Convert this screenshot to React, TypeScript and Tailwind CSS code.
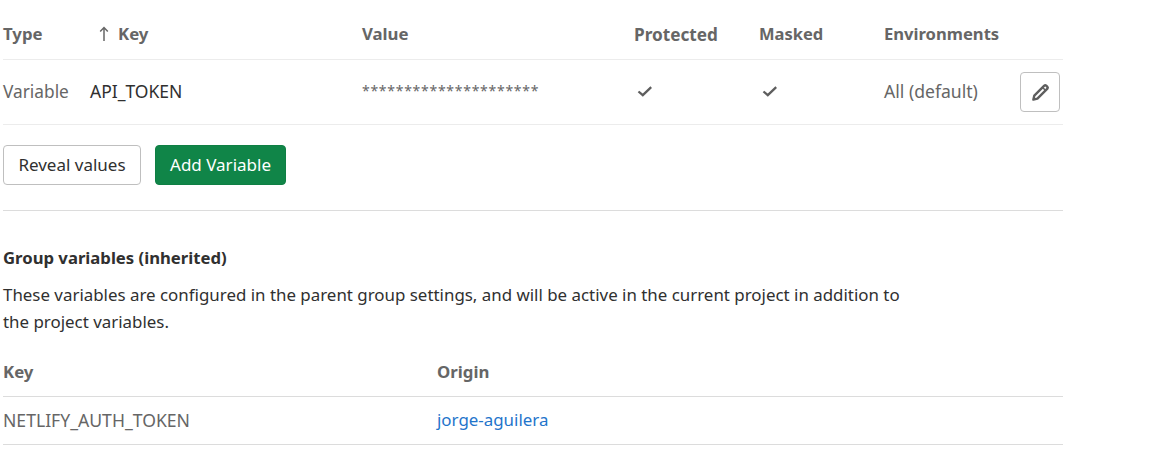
const font = "font-['Noto_Sans',sans-serif]"

function CheckIcon() {
  return (
    <svg width="16" height="16" viewBox="0 0 16 16" className="text-[#5e5e5e]">
      <path d="M1.5 8.5 L5.8 12.2 L14.2 4.2" fill="none" stroke="currentColor" strokeWidth="2.3" />
    </svg>
  )
}

function EditIcon() {
  return (
    <svg width="19" height="19" viewBox="0 0 16 16" className="text-[#5e5e5e]">
      <path
        d="M2 14 L2.8 10.6 L11.2 2.2 Q12 1.5 12.8 2.2 L13.8 3.2 Q14.5 4 13.8 4.8 L5.4 13.2 Z"
        fill="none"
        stroke="currentColor"
        strokeWidth="2"
        strokeLinejoin="round"
      />
      <path d="M10 4 L12 6" stroke="currentColor" strokeWidth="1.2" />
    </svg>
  )
}

function ArrowUpIcon() {
  return (
    <svg width="10" height="16" viewBox="0 0 10 16" className="text-[#666666]">
      <path d="M5 15 V2 M1.2 5.6 L5 1.6 L8.8 5.6" fill="none" stroke="currentColor" strokeWidth="1.5" />
    </svg>
  )
}

export default function App() {
  return (
    <div className={`w-[1176px] h-[466px] overflow-hidden bg-white pl-[3px] pr-[113px] text-[#303030] ${font}`}>
      {/* Project variables */}
      <div className="grid grid-cols-[87px_272px_272px_125px_125px_1fr] h-[60px] items-center border-b border-[#ececec] pt-[10px] text-[16.8px] font-bold text-[#666666]">
        <div className="pb-[2px]">Type</div>
        <div className="flex items-center pl-[9px] gap-[9px] pb-[2px]">
          <ArrowUpIcon />
          <span>Key</span>
        </div>
        <div className="pb-[2px]">Value</div>
        <div className="text-[17.2px]">Protected</div>
        <div className="text-[16.5px]">Masked</div>
        <div className="text-[16.6px]">Environments</div>
      </div>
      <div className="grid grid-cols-[87px_272px_272px_125px_125px_1fr] h-[65px] items-center border-b border-[#ececec] text-[17.3px] text-[#666666]">
        <div>Variable</div>
        <div className="text-[17.5px] text-[#303030] pb-[2px]">API_TOKEN</div>
        <div className="text-[14px] tracking-[0.72px] pb-[3px]">*********************</div>
        <div className="pl-[3px] pb-[3px]">
          <CheckIcon />
        </div>
        <div className="pl-[3px] pb-[3px]">
          <CheckIcon />
        </div>
        <div className="flex items-center justify-between pr-[3px]">
          <span className="text-[17.6px] pb-[2px]">All (default)</span>
          <button className="flex items-center justify-center w-[40px] h-[40px] rounded-[4px] border border-[#bfbfbf] bg-white">
            <EditIcon />
          </button>
        </div>
      </div>

      <div className="flex gap-[14px] mt-[20px] text-[17px]">
        <button className="w-[138px] h-[40px] rounded-[4px] border border-[#bfbfbf] bg-white text-[#303030]">Reveal values</button>
        <button className="w-[131px] h-[40px] rounded-[4px] border border-[#0f7f44] bg-[#108548] text-white">Add Variable</button>
      </div>

      <div className="mt-[25px] border-t border-[#dcdcdc]" />

      {/* Group variables */}
      <h4 className="mt-[35px] h-[24px] leading-[24px] text-[16.7px] font-bold text-[#303030]">Group variables (inherited)</h4>
      <p className="mt-[11px] w-[910px] text-[16.9px] leading-[27px]">
        These variables are configured in the parent group settings, and will be active in the current project in addition to the project variables.
      </p>
      <div className="grid grid-cols-[434px_1fr] h-[51px] items-center mt-[11px] pt-[2px] border-b border-[#dcdcdc] text-[16.8px] font-bold text-[#666666]">
        <div>Key</div>
        <div>Origin</div>
      </div>
      <div className="grid grid-cols-[434px_1fr] h-[48px] items-center border-b border-[#dcdcdc] text-[#666666]">
        <div className="text-[17.6px]">NETLIFY_AUTH_TOKEN</div>
        <a className="text-[16.9px] text-[#1f75cb] pb-[1px]">jorge-aguilera</a>
      </div>
    </div>
  )
}
